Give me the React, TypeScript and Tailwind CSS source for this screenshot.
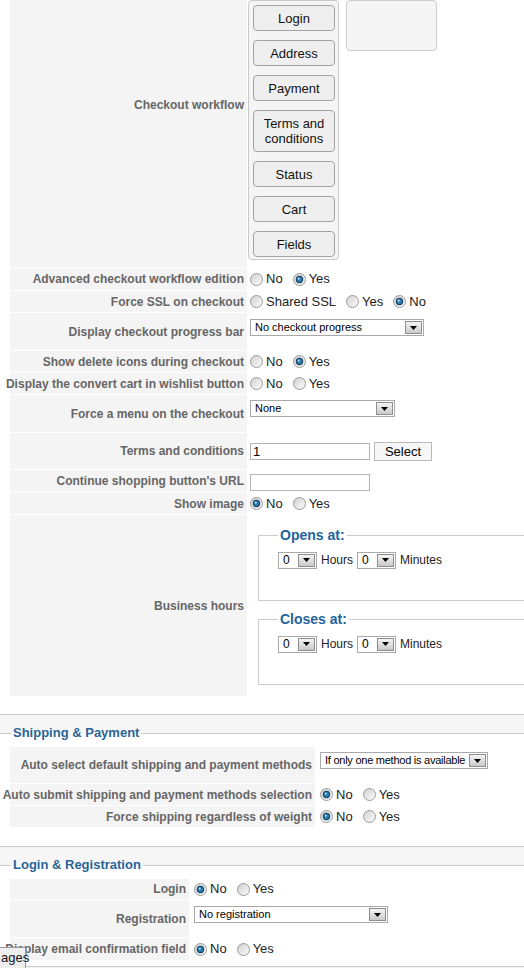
import React from 'react';

type RowProps = {
  label: string;
  labelClass: string;
  contentClass?: string;
  children?: React.ReactNode;
};

// one line of the settings table: grey key cell on the left, value on the right
const Row = ({ label, labelClass, contentClass = 'items-center pl-[2px]', children }: RowProps) => (
  <div className="flex gap-px">
    <div
      className={`flex shrink-0 items-center justify-end whitespace-nowrap bg-[#f4f4f4] pr-[3px] text-[12px] font-bold text-[#666] ${labelClass}`}
    >
      <span>{label}</span>
    </div>
    <div className={`flex min-w-0 flex-1 ${contentClass}`}>{children}</div>
  </div>
);

const RadioDot = ({ checked }: { checked?: boolean }) => (
  <svg width="13" height="13" viewBox="0 0 13 13" className="shrink-0">
    <defs>
      <linearGradient id="radioFill" x1="0" y1="0" x2="1" y2="1">
        <stop offset="0" stopColor="#cfcfcf" />
        <stop offset="1" stopColor="#fdfdfd" />
      </linearGradient>
    </defs>
    <circle cx="6.5" cy="6.5" r="6" fill="url(#radioFill)" stroke="#9b9b9b" />
    {checked && (
      <>
        <circle cx="6.5" cy="6.5" r="3.7" fill="#163f60" />
        <circle cx="6.5" cy="6.5" r="2.7" fill="#2a7aab" />
        <circle cx="5.7" cy="5.7" r="1.1" fill="#a6d5f2" />
      </>
    )}
  </svg>
);

const Radios = ({ options, value }: { options: string[]; value?: number }) => (
  <div className="flex items-center gap-[10px] text-[13px] text-[#222]">
    {options.map((opt, i) => (
      <label key={opt} className="flex items-center gap-[3px]">
        <RadioDot checked={i === value} />
        <span>{opt}</span>
      </label>
    ))}
  </div>
);

const Dropdown = ({ text, widthClass, textClass = 'text-[11px]' }: { text: string; widthClass: string; textClass?: string }) => (
  <div
    className={`flex h-[17px] shrink-0 items-center justify-between border border-[#a9a9a9] bg-white pl-[4px] pr-[1px] text-black ${widthClass}`}
  >
    <span className={`truncate leading-none ${textClass}`}>{text}</span>
    <span className="flex h-[13px] w-[17px] shrink-0 items-center justify-center border border-[#8e8e8e] bg-linear-to-b from-[#f4f4f4] to-[#c9c9c9]">
      <svg width="7" height="4" viewBox="0 0 7 4">
        <path d="M0 0h7L3.5 4z" fill="#000" />
      </svg>
    </span>
  </div>
);

const TimeBox = ({ title }: { title: string }) => (
  <fieldset className="h-[74px] w-[300px] shrink-0 border border-[#cccccc] pl-[19px] pt-[8px]">
    <legend className="px-[2px] text-[14px] font-bold leading-[16px] text-[#23639a]">{title}</legend>
    <div className="flex items-center gap-[4px] text-[12px] text-[#222]">
      <Dropdown text="0" widthClass="w-[39px]" textClass="text-[12px]" />
      <span>Hours</span>
      <Dropdown text="0" widthClass="w-[39px]" textClass="text-[12px]" />
      <span>Minutes</span>
    </div>
  </fieldset>
);

const workflowSteps = ['Login', 'Address', 'Payment', 'Terms and conditions', 'Status', 'Cart', 'Fields'];

const Section = ({ title, children }: { title: string; children: React.ReactNode }) => (
  <fieldset className="mt-[10px] border-x-0 border-y border-[#cccccc] bg-white">
    <legend className="ml-[11px] px-[2px] text-[13px] font-bold leading-[16px] text-[#2a6496]">{title}</legend>
    {children}
  </fieldset>
);

export default function App() {
  return (
    <div className="relative h-[968px] w-[524px] overflow-hidden bg-[#f6f6f6] font-['Liberation_Sans',Arial,sans-serif]">
      {/* checkout options */}
      <div className="border-b border-[#cccccc] bg-white pb-[18px]">
        <div className="flex flex-col gap-px pl-[10px]">
          <Row label="Checkout workflow" labelClass="w-[237px] h-[267px] pb-[58px]" contentClass="items-start gap-[7px]">
            <div className="flex w-[91px] flex-col gap-[9px] rounded-[4px] border border-[#c9c9c9] bg-[#f5f5f5] pb-[2px] pl-[4px] pt-[4px]">
              {workflowSteps.map((step) => (
                <div
                  key={step}
                  className={`flex w-[82px] items-center justify-center rounded-[4px] border border-[#a3a3a3] bg-[#efefef] px-[6px] text-center text-[13px] leading-[15px] text-[#111] ${
                    step === 'Terms and conditions' ? 'h-[42px]' : 'h-[26px]'
                  }`}
                >
                  {step}
                </div>
              ))}
            </div>
            <div className="h-[51px] w-[91px] rounded-[4px] border border-[#cccccc] bg-[#f5f5f5]" />
          </Row>
          <Row label="Advanced checkout workflow edition" labelClass="w-[237px] h-[22px]">
            <Radios options={['No', 'Yes']} value={1} />
          </Row>
          <Row label="Force SSL on checkout" labelClass="w-[237px] h-[21px]">
            <Radios options={['Shared SSL', 'Yes', 'No']} value={2} />
          </Row>
          <Row label="Display checkout progress bar" labelClass="w-[237px] h-[37px]" contentClass="items-start pl-[2px] pt-[6px]">
            <Dropdown text="No checkout progress" widthClass="w-[174px]" />
          </Row>
          <Row label="Show delete icons during checkout" labelClass="w-[237px] h-[21px]">
            <Radios options={['No', 'Yes']} value={1} />
          </Row>
          <Row label="Display the convert cart in wishlist button" labelClass="w-[237px] h-[21px]">
            <Radios options={['No', 'Yes']} />
          </Row>
          <Row label="Force a menu on the checkout" labelClass="w-[237px] h-[37px]" contentClass="items-start pl-[2px] pt-[5px]">
            <Dropdown text="None" widthClass="w-[145px]" />
          </Row>
          <Row label="Terms and conditions" labelClass="w-[237px] h-[36px]" contentClass="items-center gap-[4px] pl-[2px]">
            <input
              readOnly
              defaultValue="1"
              className="h-[17px] w-[120px] border border-[#b4b4b4] bg-white px-[2px] text-[13px] leading-[15px] text-black outline-none"
            />
            <button className="h-[19px] w-[58px] border border-[#b9b9b9] bg-[#f7f7f7] text-[13px] leading-[17px] text-black">
              Select
            </button>
          </Row>
          <Row label="Continue shopping button's URL" labelClass="w-[237px] h-[22px]" contentClass="items-start pl-[2px] pt-[4px]">
            <input readOnly className="h-[17px] w-[120px] border border-[#b4b4b4] bg-white px-[2px] text-[13px] outline-none" />
          </Row>
          <Row label="Show image" labelClass="w-[237px] h-[21px]">
            <Radios options={['No', 'Yes']} value={0} />
          </Row>
          <Row label="Business hours" labelClass="w-[237px] h-[181px]" contentClass="flex-col items-start gap-[10px] pl-[10px] pt-[12px]">
            <TimeBox title="Opens at:" />
            <TimeBox title="Closes at:" />
          </Row>
        </div>
      </div>

      <Section title="Shipping & Payment">
        <div className="flex flex-col gap-px pb-[19px] pl-[10px] pt-[6px]">
          <Row label="Auto select default shipping and payment methods" labelClass="w-[305px] h-[36px]" contentClass="items-start pl-[4px] pt-[5px]">
            <Dropdown text="If only one method is available" widthClass="w-[168px]" textClass="text-[11px] tracking-[-0.25px]" />
          </Row>
          <Row label="Auto submit shipping and payment methods selection" labelClass="w-[305px] h-[21px]" contentClass="items-center pl-[4px]">
            <Radios options={['No', 'Yes']} value={0} />
          </Row>
          <Row label="Force shipping regardless of weight" labelClass="w-[305px] h-[21px]" contentClass="items-center pl-[4px]">
            <Radios options={['No', 'Yes']} value={0} />
          </Row>
        </div>
      </Section>

      <Section title="Login & Registration">
        <div className="flex flex-col gap-px pb-[6px] pl-[10px] pt-[6px]">
          <Row label="Login" labelClass="w-[179px] h-[20px]" contentClass="items-center pl-[4px]">
            <Radios options={['No', 'Yes']} value={0} />
          </Row>
          <Row label="Registration" labelClass="w-[179px] h-[37px]" contentClass="items-start pl-[4px] pt-[6px]">
            <Dropdown text="No registration" widthClass="w-[194px]" />
          </Row>
          <Row label="Display email confirmation field" labelClass="w-[179px] h-[22px]" contentClass="items-center pl-[4px]">
            <Radios options={['No', 'Yes']} value={0} />
          </Row>
        </div>
      </Section>

      {/* message tab peeking in from the bottom-left corner */}
      <div className="absolute bottom-0 left-0 h-[21px] w-[26px] border-r border-t border-[#9a9a9a] bg-[#eeeeee] pl-px text-[13px] leading-[20px] text-[#111]">
        ages
      </div>
    </div>
  );
}
